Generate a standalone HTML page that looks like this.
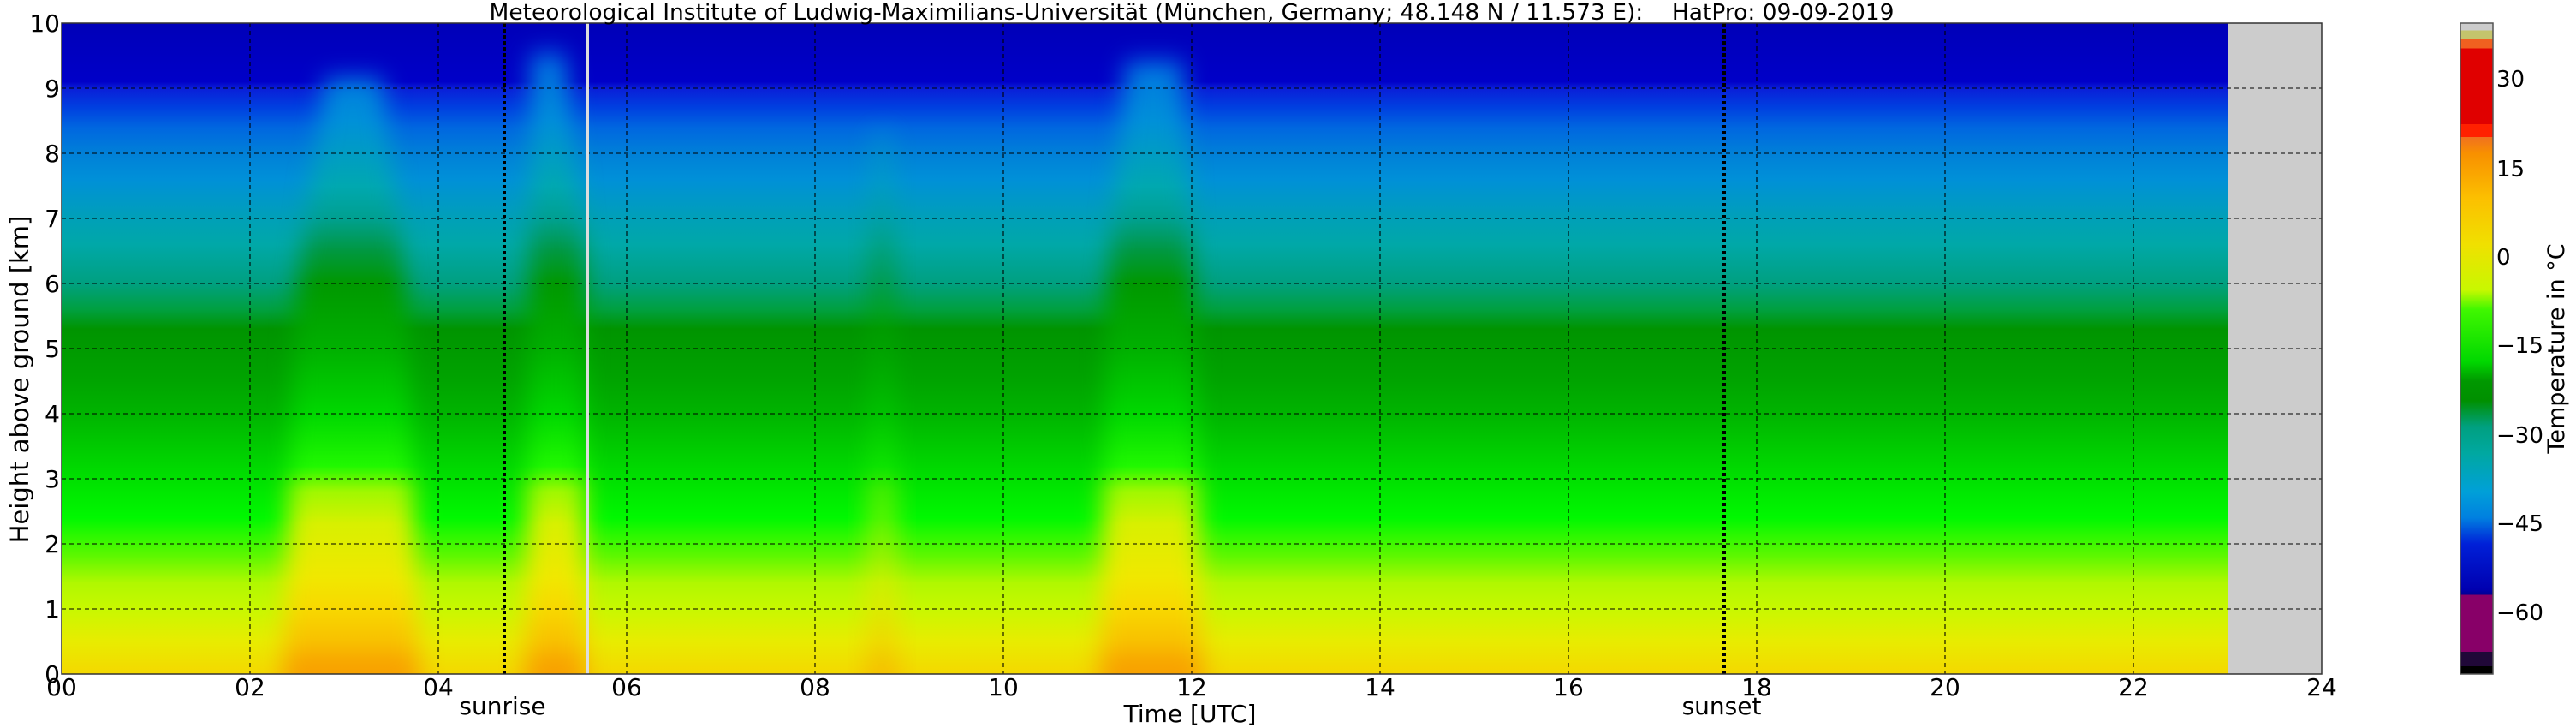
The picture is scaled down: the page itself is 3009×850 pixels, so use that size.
<!DOCTYPE html>
<html><head><meta charset="utf-8"><style>
html,body{margin:0;padding:0;background:#fff;}
svg{display:block;font-family:"DejaVu Sans","Liberation Sans",sans-serif;}
</style></head><body>
<svg width="3009" height="850" viewBox="0 0 3009 850" xmlns="http://www.w3.org/2000/svg">
<defs>
<linearGradient id="base" gradientUnits="userSpaceOnUse" x1="0" y1="27" x2="0" y2="787">
<stop offset="0" stop-color="#0000b8"/>
<stop offset="0.09" stop-color="#0000c8"/>
<stop offset="0.10" stop-color="#0a1ed8"/>
<stop offset="0.13" stop-color="#0040e0"/>
<stop offset="0.16" stop-color="#0066e0"/>
<stop offset="0.20" stop-color="#0080d8"/>
<stop offset="0.24" stop-color="#0090d8"/>
<stop offset="0.30" stop-color="#00a0b8"/>
<stop offset="0.34" stop-color="#00a8a8"/>
<stop offset="0.40" stop-color="#00a080"/>
<stop offset="0.44" stop-color="#00a040"/>
<stop offset="0.47" stop-color="#009400"/>
<stop offset="0.55" stop-color="#00a400"/>
<stop offset="0.60" stop-color="#00b400"/>
<stop offset="0.70" stop-color="#00e000"/>
<stop offset="0.76" stop-color="#00f800"/>
<stop offset="0.82" stop-color="#60f800"/>
<stop offset="0.86" stop-color="#b0f800"/>
<stop offset="0.90" stop-color="#c8f800"/>
<stop offset="0.95" stop-color="#e8ec00"/>
<stop offset="1" stop-color="#f4d800"/>
</linearGradient>
<linearGradient id="warm" gradientUnits="userSpaceOnUse" x1="0" y1="27" x2="0" y2="787">
<stop offset="0" stop-color="#0050e0"/>
<stop offset="0.07" stop-color="#0078e0"/>
<stop offset="0.15" stop-color="#0090d8"/>
<stop offset="0.25" stop-color="#00a8b0"/>
<stop offset="0.30" stop-color="#00a090"/>
<stop offset="0.35" stop-color="#009840"/>
<stop offset="0.40" stop-color="#009800"/>
<stop offset="0.50" stop-color="#00b000"/>
<stop offset="0.60" stop-color="#00d800"/>
<stop offset="0.68" stop-color="#20f800"/>
<stop offset="0.72" stop-color="#a0f800"/>
<stop offset="0.77" stop-color="#d8f000"/>
<stop offset="0.85" stop-color="#f0e800"/>
<stop offset="0.90" stop-color="#f8d800"/>
<stop offset="0.95" stop-color="#f8c000"/>
<stop offset="1" stop-color="#f89800"/>
</linearGradient>
<filter id="bl" x="-50%" y="-10%" width="200%" height="120%"><feGaussianBlur stdDeviation="14"/></filter>
<mask id="mk" maskUnits="userSpaceOnUse" x="0" y="0" width="3009" height="850">
<g filter="url(#bl)" fill="#fff">
<polygon points="330,800 490,800 475,350 446,90 380,90 345,350"/>
<polygon points="613,800 683,800 683,300 660,60 620,60 618,300"/>
<polygon points="1285,800 1405,800 1395,350 1381,70 1315,70 1292,350"/>
</g>
<g filter="url(#bl)" fill="#fff" opacity="0.45">
<polygon points="1010,800 1050,800 1045,150 1015,150"/>
</g>
</mask>
<linearGradient id="cb" x1="0" y1="0" x2="0" y2="1">
<stop offset="0" stop-color="#cccccc"/>
<stop offset="0.011" stop-color="#cccccc"/>
<stop offset="0.011" stop-color="#c4c46c"/>
<stop offset="0.024" stop-color="#c4c46c"/>
<stop offset="0.024" stop-color="#f06020"/>
<stop offset="0.039" stop-color="#f06020"/>
<stop offset="0.039" stop-color="#e00000"/>
<stop offset="0.155" stop-color="#e00000"/>
<stop offset="0.155" stop-color="#ff2000"/>
<stop offset="0.175" stop-color="#ff2000"/>
<stop offset="0.175" stop-color="#f07020"/>
<stop offset="0.20" stop-color="#f89000"/>
<stop offset="0.27" stop-color="#fcc000"/>
<stop offset="0.34" stop-color="#f0e000"/>
<stop offset="0.41" stop-color="#c8f800"/>
<stop offset="0.44" stop-color="#40f800"/>
<stop offset="0.52" stop-color="#00d800"/>
<stop offset="0.55" stop-color="#009800"/>
<stop offset="0.58" stop-color="#009000"/>
<stop offset="0.62" stop-color="#00a080"/>
<stop offset="0.66" stop-color="#00a8a0"/>
<stop offset="0.72" stop-color="#00a0d8"/>
<stop offset="0.76" stop-color="#0080e0"/>
<stop offset="0.80" stop-color="#0020d8"/>
<stop offset="0.87" stop-color="#0000b0"/>
<stop offset="0.878" stop-color="#000090"/>
<stop offset="0.878" stop-color="#880068"/>
<stop offset="0.966" stop-color="#880068"/>
<stop offset="0.966" stop-color="#200838"/>
<stop offset="0.988" stop-color="#200838"/>
<stop offset="0.988" stop-color="#000000"/>
<stop offset="1" stop-color="#000000"/>
</linearGradient>
<clipPath id="pc"><rect x="72" y="27" width="2531" height="760"/></clipPath>
</defs>

<rect x="72" y="27" width="2531" height="760" fill="url(#base)"/>
<g clip-path="url(#pc)">
<rect x="72" y="27" width="2531" height="760" fill="url(#warm)" mask="url(#mk)"/>
</g>
<rect x="2603" y="27" width="109" height="760" fill="#cccccc"/>

<g stroke="#000" stroke-width="1.1" stroke-dasharray="5,4" fill="none">
<path d="M292 27V787M512 27V787M732 27V787M952 27V787M1172 27V787M1392 27V787M1612 27V787M1832 27V787M2052 27V787M2272 27V787M2492 27V787"/>
<path d="M72 103H2712M72 179H2712M72 255H2712M72 331H2712M72 407H2712M72 483H2712M72 559H2712M72 635H2712M72 711H2712"/>
</g>
<line x1="589" y1="27" x2="589" y2="787" stroke="#000" stroke-width="4" stroke-dasharray="4,3"/>
<line x1="2014" y1="27" x2="2014" y2="787" stroke="#000" stroke-width="4" stroke-dasharray="4,3"/>
<line x1="686" y1="27" x2="686" y2="787" stroke="#dddddd" stroke-width="4"/>
<rect x="72" y="27" width="2640" height="760" fill="none" stroke="#333" stroke-width="1.5"/>

<text x="1392" y="23" font-size="26" text-anchor="middle" textLength="1641" lengthAdjust="spacingAndGlyphs" xml:space="preserve">Meteorological Institute of Ludwig-Maximilians-Universität (München, Germany; 48.148 N / 11.573 E):    HatPro: 09-09-2019</text>

<g font-size="28" text-anchor="end">
<text x="70" y="797">0</text><text x="70" y="721">1</text><text x="70" y="645">2</text>
<text x="70" y="569">3</text><text x="70" y="493">4</text><text x="70" y="417">5</text>
<text x="70" y="341">6</text><text x="70" y="265">7</text><text x="70" y="189">8</text>
<text x="70" y="113">9</text><text x="70" y="37">10</text>
</g>
<g font-size="28" text-anchor="middle">
<text x="72" y="812">00</text><text x="292" y="812">02</text><text x="512" y="812">04</text>
<text x="732" y="812">06</text><text x="952" y="812">08</text><text x="1172" y="812">10</text>
<text x="1392" y="812">12</text><text x="1612" y="812">14</text><text x="1832" y="812">16</text>
<text x="2052" y="812">18</text><text x="2272" y="812">20</text><text x="2492" y="812">22</text>
<text x="2712" y="812">24</text>
<text x="587" y="834">sunrise</text>
<text x="2011" y="834">sunset</text>
<text x="1390" y="843">Time [UTC]</text>
</g>
<text transform="translate(33,443) rotate(-90)" font-size="29" text-anchor="middle">Height above ground [km]</text>

<rect x="2874" y="27" width="38" height="760" fill="url(#cb)" stroke="#555" stroke-width="1.5"/>
<g font-size="26">
<text x="2916" y="101">30</text>
<text x="2916" y="206">15</text>
<text x="2916" y="309">0</text>
<text x="2916" y="412">−15</text>
<text x="2916" y="517">−30</text>
<text x="2916" y="620">−45</text>
<text x="2916" y="724">−60</text>
</g>
<text transform="translate(2995,407) rotate(-90)" font-size="27" text-anchor="middle">Temperature in °C</text>
</svg>
</body></html>
